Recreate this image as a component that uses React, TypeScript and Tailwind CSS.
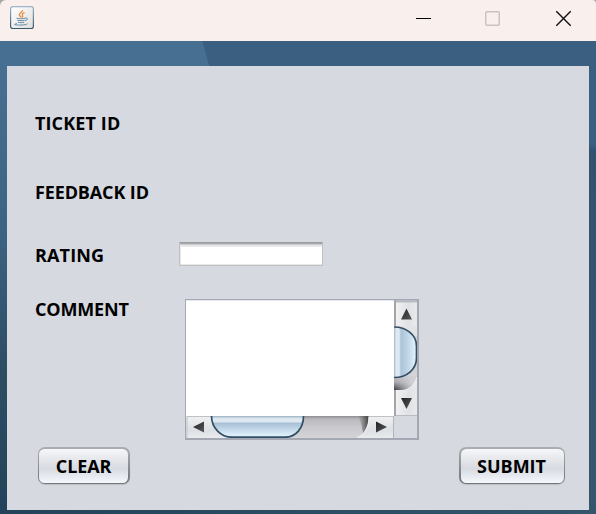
import React from "react";

function JavaIcon() {
  return (
    <svg width="24" height="24" viewBox="0 0 24 24">
      <defs>
        <linearGradient id="ji-border" x1="0" y1="0" x2="0" y2="1">
          <stop offset="0" stopColor="#9fb6c8" />
          <stop offset="1" stopColor="#3c566c" />
        </linearGradient>
        <linearGradient id="ji-fill" x1="0" y1="0" x2="1" y2="1">
          <stop offset="0" stopColor="#ffffff" />
          <stop offset="1" stopColor="#dedede" />
        </linearGradient>
      </defs>
      <rect x="0.6" y="0.6" width="22.8" height="21.9" rx="2.2" fill="url(#ji-fill)" stroke="url(#ji-border)" strokeWidth="1.2" />
      <path d="M12.600 4c.4 2-3.600 3-3.300 5 .1 1 1.500 1.500 1.800 2.600M14.600 6.600c-2.600 1-2.800 1.800-2 2.800.6.9.1 1.500-.6 2" fill="none" stroke="#ee8a35" strokeWidth="1.300" />
      <path d="M6.500 12.100c1 .7 7 .8 9.300 0M15.600 12.100c2.700-.6 2.100 2.100-.5 2.600M7.300 14.200c1.500.6 6 .6 7.300 0M8 16.200c1.500.6 4.800.6 6.200 0M7 17.700c-5 .8-1.500 1.500 4 1.300 3.500 0 6-.6 6.500-1.300" fill="none" stroke="#6489a4" strokeWidth="1" />
    </svg>
  );
}

function TitleBar() {
  return (
    <div className="bg-[#aaa8a7]">
      <header className="flex h-[41px] items-start justify-between rounded-tl-[6px] rounded-tr-[4px] bg-[#f9f0ed] pl-[10px] pr-6 pt-[6px]">
        <JavaIcon />
        <svg className="mt-[4px]" width="157" height="18" viewBox="0 0 157 18" fill="none">
          <path d="M1 8.500H16" stroke="#000" />
          <rect x="70.750" y="1.750" width="13.500" height="13.500" rx="1" stroke="#c9c3c0" strokeWidth="1.500" />
          <path d="M141.300 1.300L155.700 15.700M155.700 1.300L141.300 15.700" stroke="#111" strokeWidth="1.400" />
        </svg>
      </header>
    </div>
  );
}

function Label({ children, spacing = "" }: { children: string; spacing?: string }) {
  return (
    <span
      className={`block whitespace-nowrap font-['Open_Sans','Noto_Sans',sans-serif] text-[18px] font-bold leading-6 text-black ${spacing}`}
    >
      {children}
    </span>
  );
}

function Button({ children, width, spacing }: { children: string; width: string; spacing: string }) {
  return (
    <button
      className={`${width} h-[37px] rounded-[7px] bg-linear-to-b from-[#acaeb2] to-[#727478] p-[1.500px] shadow-[0_1px_1px_#bcbfc7]`}
    >
      <span className="flex h-full items-center justify-center rounded-[5.500px] bg-[linear-gradient(to_bottom,#f6f7f9_0%,#e5e7eb_30%,#d7dae0_58%,#e5e8ef_78%,#f6f8fd_100%)]">
        <Label spacing={spacing}>{children}</Label>
      </span>
    </button>
  );
}

function VerticalBar() {
  return (
    <svg width="24" height="116" viewBox="0 0 24 116">
      <defs>
        <linearGradient id="v-btn" x1="0" y1="0" x2="1" y2="0">
          <stop offset="0" stopColor="#f4f4f5" />
          <stop offset=".6" stopColor="#dfe1e4" />
          <stop offset="1" stopColor="#e9ebed" />
        </linearGradient>
        <linearGradient id="v-thumb" x1="0" y1="0" x2="1" y2="0">
          <stop offset="0" stopColor="#829caf" />
          <stop offset=".13" stopColor="#dfe9f2" />
          <stop offset=".26" stopColor="#e0e9f1" />
          <stop offset=".34" stopColor="#abc3d9" />
          <stop offset=".6" stopColor="#bed3e5" />
          <stop offset="1" stopColor="#e4f4ff" />
        </linearGradient>
        <linearGradient id="v-shadow" x1="0" y1="0" x2="0" y2="1">
          <stop offset="0" stopColor="#c6c6cb" />
          <stop offset=".45" stopColor="#a4a4a9" />
          <stop offset="1" stopColor="#3e3e40" />
        </linearGradient>
        <linearGradient id="v-fade" x1="0" y1="0" x2="1" y2="0">
          <stop offset="0" stopColor="#cfcfd4" stopOpacity="0" />
          <stop offset=".8" stopColor="#cfcfd4" />
        </linearGradient>
        <linearGradient id="arrow" x1="0" y1="0" x2="1" y2="1">
          <stop offset="0" stopColor="#222" />
          <stop offset="1" stopColor="#58595c" />
        </linearGradient>
      </defs>
      <rect width="24" height="116" fill="url(#v-btn)" />
      <path d="M0 0H24V2.500H0Z" fill="#b7bbc2" />
      <path d="M0 0H2V116H0Z" fill="#a3a5a8" />
      <path d="M0 26H23V78C20 84 15 90 9 90H0Z" fill="#d2d3d8" />
      <path d="M0 26H23V36H17C12 29 7 27 0 27Z" fill="#e1e3e6" />
      <path d="M0 76H23V78C20 84 15 90 9 90H0Z" fill="url(#v-shadow)" />
      <path d="M0 76H23V78C20 84 15 90 9 90H0Z" fill="url(#v-fade)" />
      <path d="M23 77C20 86 15 90 8 90.500" fill="none" stroke="#f3f4f5" />
      <path d="M-1 27C12 26.500 22.500 35 22.500 46V58C22.500 69 13 78 -1 77.500" fill="url(#v-thumb)" stroke="#344e64" strokeWidth="1.700" />
      <path d="M7 19.500L12.500 8.500L18 19.500Z" fill="url(#arrow)" />
      <path d="M7 98H18L12.500 109Z" fill="url(#arrow)" />
      <path d="M2 115.500H24" stroke="#b9bcc1" />
    </svg>
  );
}

function HorizontalBar() {
  return (
    <svg width="208" height="22" viewBox="0 0 208 22">
      <defs>
        <linearGradient id="h-btn" x1="0" y1="0" x2="0" y2="1">
          <stop offset="0" stopColor="#f1f1f2" />
          <stop offset=".65" stopColor="#dcdfe3" />
          <stop offset="1" stopColor="#e9ebee" />
        </linearGradient>
        <linearGradient id="h-track" x1="0" y1="0" x2="0" y2="1">
          <stop offset="0" stopColor="#8e8e91" />
          <stop offset=".14" stopColor="#b9b9be" />
          <stop offset=".5" stopColor="#c8c8cd" />
          <stop offset="1" stopColor="#d3d3d8" />
        </linearGradient>
        <linearGradient id="h-thumb" x1="0" y1="0" x2="0" y2="1">
          <stop offset="0" stopColor="#9bb1c3" />
          <stop offset=".13" stopColor="#e0eaf2" />
          <stop offset=".28" stopColor="#dce7f0" />
          <stop offset=".34" stopColor="#a8c0d6" />
          <stop offset=".65" stopColor="#c4d9ea" />
          <stop offset="1" stopColor="#e6f7ff" />
        </linearGradient>
        <linearGradient id="h-shadow" x1="0" y1="0" x2="1" y2="0">
          <stop offset="0" stopColor="#555" stopOpacity="0" />
          <stop offset="1" stopColor="#444" />
        </linearGradient>
      </defs>
      <rect width="208" height="22" fill="url(#h-btn)" />
      <path d="M1 22V.5H208" fill="none" stroke="#bfc1c5" />
      <path d="M25 0H182C183 10 178 19 171 22H43C32 18 25 10 25 0Z" fill="url(#h-track)" />
      <path d="M172 0H182.500C182.500 8 180 13 177 17Q176 8 172 0Z" fill="url(#h-shadow)" />
      <path d="M183 1C183.500 11 179 19 171 21.500" fill="none" stroke="#f0f1f2" />
      <path d="M25.500 0C25.500 12 35 21.200 46 21.200H99C110 21.200 117.500 12 117.500 0Z" fill="url(#h-thumb)" />
      <path d="M25.500 0C25.500 12 35 21.200 46 21.200H99C110 21.200 117.500 12 117.500 0" fill="none" stroke="#344e64" strokeWidth="1.700" />
      <path d="M7 11L18 5.500V16.500Z" fill="url(#arrow)" />
      <path d="M190 5.500L201 11L190 16.500Z" fill="url(#arrow)" />
      <path d="M207.500 0V22" stroke="#b2b5bb" />
    </svg>
  );
}

function CommentArea() {
  return (
    <div className="grid h-[141px] w-[234px] grid-cols-[208px_24px] grid-rows-[116px_22px] border-t border-r-2 border-b-2 border-l border-[#a3a8b2] bg-[#d6d9e0]">
      <div className="border-t border-t-[#e5e8ee] bg-white" />
      <div className="w-[23px] overflow-hidden"><VerticalBar /></div>
      <HorizontalBar />
    </div>
  );
}

export default function App() {
  return (
    <main className="flex h-[514px] w-[596px] flex-col overflow-hidden">
      <TitleBar />
      <div className="h-[25px] bg-[linear-gradient(74.4deg,#466f91_201px,#3a5f81_202px)]" />
      <div className="flex h-[444px]">
        <div className="w-[7px] bg-[linear-gradient(to_bottom,#466f91,#3c6382_37%,#2c4e63_68%,#24435a)]" />
        <section className="flex flex-1 flex-col bg-[#d6d9e0] pl-[28px] pr-[24px]">
          <div className="pt-[45px]"><Label spacing="tracking-[0.120px]">TICKET ID</Label></div>
          <div className="pt-[45px]"><Label spacing="tracking-[-0.130px]">FEEDBACK ID</Label></div>
          <div className="mt-[38px] flex h-[25px]">
            <div className="w-[144px] pt-[1px]"><Label spacing="tracking-[0.160px]">RATING</Label></div>
            <input className="h-6 w-[144px] border border-[#c2c2c2] border-t-[#9b9ca0] bg-white shadow-[inset_0_1px_0_#a9aaae,inset_0_2px_0_#c8c9cc,inset_0_4px_0_#e9e9ea,inset_1px_-1px_0_#e6e6e6] outline-none" />
          </div>
          <div className="flex pt-[32px]">
            <div className="-mt-[2px] w-[150px]"><Label spacing="tracking-[-0.170px]">COMMENT</Label></div>
            <CommentArea />
          </div>
          <div className="flex justify-between pl-[2.500px] pt-[7px]">
            <Button width="w-[92px]" spacing="tracking-[-0.150px]">CLEAR</Button>
            <Button width="w-[106px]" spacing="tracking-[0px] pr-[1px]">SUBMIT</Button>
          </div>
        </section>
        <div className="w-[7px] bg-[linear-gradient(to_bottom,#3a5f81_0,#3a5f81_78px,#315371_84px,#34566d_444px)]" />
      </div>
      <div className="h-[4px] bg-linear-to-r from-[#24435a] to-[#34566d]" />
    </main>
  );
}
